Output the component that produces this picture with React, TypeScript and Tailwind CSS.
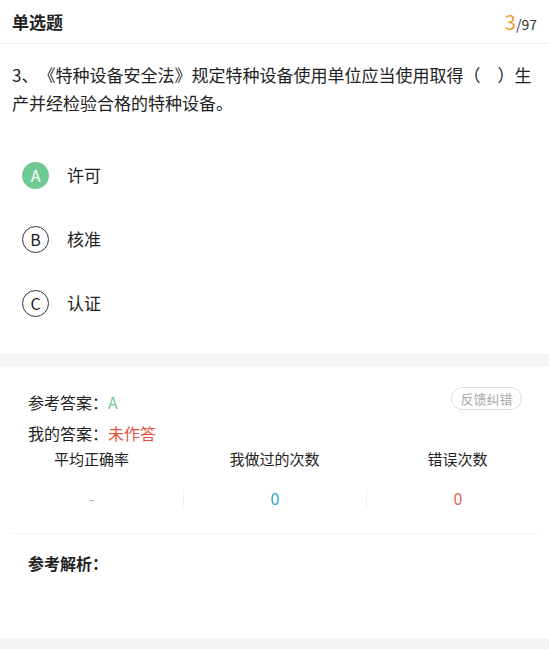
import React from "react";

const font = { fontFamily: '"Noto Sans CJK SC", "Noto Sans", sans-serif' };

const options = [
  { key: "A", text: "许可", correct: true },
  { key: "B", text: "核准", correct: false },
  { key: "C", text: "认证", correct: false },
];

export default function App() {
  return (
    <div className="min-h-screen w-full bg-white text-[#222] [text-spacing-trim:space-all]" style={font}>
      {/* top bar */}
      <div className="flex h-[44px] items-center justify-between border-b border-[#f0f0f0] px-3">
        <span className="text-[17px] font-bold leading-none">单选题</span>
        <span className="flex items-baseline leading-none">
          <span className="text-[20px] text-[#eea23f]">3</span>
          <span className="text-[14px] text-[#333]">/97</span>
        </span>
      </div>

      {/* question */}
      <div className="px-3 pt-[17px] text-[17px] leading-[28px] text-[#222]">
        3、《特种设备安全法》规定特种设备使用单位应当使用取得（　）生产并经检验合格的特种设备。
      </div>

      <div className="mt-[26px] pb-[19px]">
        {options.map((o) => (
          <div key={o.key} className="flex h-[64px] items-center pl-[22px]">
            {o.correct ? (
              <span className="flex h-[27px] w-[27px] items-center justify-center rounded-full bg-[#70c993] text-[16px] text-white">
                {o.key}
              </span>
            ) : (
              <span className="flex h-[27px] w-[27px] items-center justify-center rounded-full border border-[#333] text-[16px] text-[#222]">
                {o.key}
              </span>
            )}
            <span className="ml-[18px] text-[17px] text-[#222]">{o.text}</span>
          </div>
        ))}
      </div>

      <div className="h-[13px] bg-[#f5f5f5]" />

      {/* answer block */}
      <div className="pt-[19px]">
        <div className="flex h-[32px] items-start justify-between pl-[28px] pr-[27px]">
          <div className="flex h-[32px] items-center text-[16px] text-[#222]">
            参考答案：<span className="text-[#70c993]">A</span>
          </div>
          <div className="mt-[1px] flex h-[23px] w-[71px] items-center justify-center rounded-full border border-[#dcdcdc] text-[13px] text-[#aaa]">
            反馈纠错
          </div>
        </div>
        <div className="flex h-[30px] items-center pl-[28px] text-[16px] text-[#222]">
          我的答案：<span className="text-[#e5533d]">未作答</span>
        </div>

        <div className="grid h-[22px] grid-cols-3 items-center text-center text-[15px] text-[#222]">
          <span>平均正确率</span>
          <span>我做过的次数</span>
          <span>错误次数</span>
        </div>
        <div className="mt-[11px] grid h-[34px] grid-cols-3 items-center text-center text-[16px]">
          <span className="text-[#8fbcb4]">-</span>
          <span className="border-l border-[#f0f0f0] text-[#3a9fd3] leading-[17px]">0</span>
          <span className="border-l border-[#f0f0f0] text-[#dc6459] leading-[17px]">0</span>
        </div>

        <div className="mx-3 mt-[18px] border-t border-[#f2f2f2]" />

        <div className="pl-[28px] pt-[15px] text-[16px] font-bold leading-[28px] text-[#222]">
          参考解析：
        </div>
        <div className="h-[61px]" />
      </div>

      <div className="h-[12px] bg-[#f5f5f5]" />
    </div>
  );
}
